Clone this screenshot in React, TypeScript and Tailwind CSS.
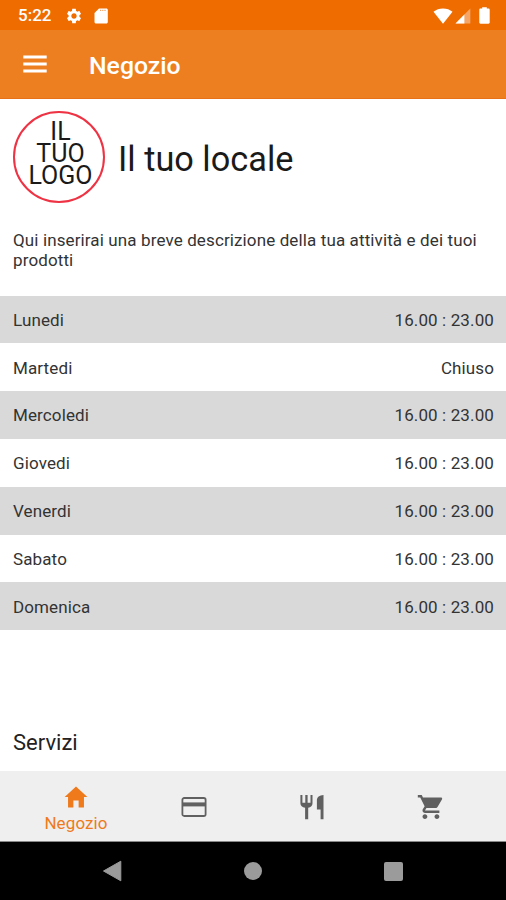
import React from 'react';
import { IoMdCart, IoMdHome } from 'react-icons/io';

interface DayHours {
  day: string;
  hours: string;
}

const openingHours: DayHours[] = [
  { day: 'Lunedi', hours: '16.00 : 23.00' },
  { day: 'Martedi', hours: 'Chiuso' },
  { day: 'Mercoledi', hours: '16.00 : 23.00' },
  { day: 'Giovedi', hours: '16.00 : 23.00' },
  { day: 'Venerdi', hours: '16.00 : 23.00' },
  { day: 'Sabato', hours: '16.00 : 23.00' },
  { day: 'Domenica', hours: '16.00 : 23.00' },
];

const StatusBar = () => (
  <div className="flex h-[30px] shrink-0 items-center bg-[#ef6c00] pl-[18px] pr-[16px] pt-[1px] text-white">
    <span className="w-[47px] pt-[1px] text-[17px] font-medium">5:22</span>
    <svg viewBox="0 0 24 24" fill="currentColor" className="h-[18px] w-[18px]">
      <path d="M19.14 12.94c.04-.3.06-.61.06-.94 0-.32-.02-.64-.07-.94l2.03-1.58c.18-.14.23-.41.12-.61l-1.92-3.32c-.12-.22-.37-.29-.59-.22l-2.39.96c-.5-.38-1.03-.7-1.62-.94l-.36-2.54c-.04-.24-.24-.41-.48-.41h-3.84c-.24 0-.43.17-.47.41l-.36 2.54c-.59.24-1.13.57-1.62.94l-2.39-.96c-.22-.08-.47 0-.59.22L2.74 8.87c-.12.21-.08.47.12.61l2.03 1.58c-.05.3-.09.63-.09.94s.02.64.07.94l-2.03 1.58c-.18.14-.23.41-.12.61l1.92 3.32c.12.22.37.29.59.22l2.39-.96c.5.38 1.03.7 1.62.94l.36 2.54c.05.24.24.41.48.41h3.84c.24 0 .44-.17.47-.41l.36-2.54c.59-.24 1.13-.56 1.62-.94l2.39.96c.22.08.47 0 .59-.22l1.92-3.32c.12-.22.07-.47-.12-.61l-2.01-1.58zM12 15.6c-1.98 0-3.6-1.62-3.6-3.6s1.62-3.6 3.6-3.6 3.6 1.62 3.6 3.6-1.62 3.6-3.6 3.6z" />
    </svg>
    <svg viewBox="0 0 14 16" className="ml-[11px] h-4 w-3.5">
      <path d="M5 .5h7.3c.9 0 1.5.6 1.5 1.5v12c0 .9-.6 1.5-1.5 1.5H2c-.9 0-1.5-.6-1.5-1.5V5z" fill="currentColor" />
      <path d="M6 2.3h6" stroke="#ef6c00" strokeWidth=".8" strokeDasharray="1.2 1" />
    </svg>
    <div className="ml-auto flex items-center">
      <svg viewBox="0 0 20 16" className="h-4 w-5">
        <path d="M10 15.7L.5 3.8C3 1.6 6.3.4 10 .4s7 1.2 9.5 3.4z" fill="currentColor" />
      </svg>
      <svg viewBox="0 0 16 16" className="ml-[2px] h-4 w-4">
        <path d="M15.3.6v14.9H.5z" fill="currentColor" fillOpacity=".4" />
        <path d="M9.4 6.6v8.9H.5z" fill="currentColor" />
      </svg>
      <svg viewBox="0 0 11 17" className="ml-[8px] h-[17px] w-[11px]">
        <path d="M3.2.3h4.6v1.3h1.7c.7 0 1.2.5 1.2 1.2v12.7c0 .7-.5 1.2-1.2 1.2h-8c-.7 0-1.2-.5-1.2-1.2V2.8c0-.7.5-1.2 1.2-1.2h1.7z" fill="currentColor" />
      </svg>
    </div>
  </div>
);

const AppBar = () => (
  <header className="flex h-[69px] shrink-0 items-center border-b border-[#e87016] bg-[#ee7f20] pl-[23px] text-white">
    <svg viewBox="0 0 24 18" className="h-[18px] w-6">
      <path d="M.3 2h23.4M.3 9h23.4M.3 16h23.4" stroke="currentColor" strokeWidth="2.8" />
    </svg>
    <h1 className="ml-[42px] pt-[3px] text-[24.8px] font-medium">Negozio</h1>
  </header>
);

const CardIcon = () => (
  <svg viewBox="0 0 26 22" className="h-[22px] w-[26px]">
    <rect x="1.4" y="2" width="23.2" height="18" rx="1.8" fill="none" stroke="currentColor" strokeWidth="1.8" />
    <path d="M1.4 8.4h23.2" stroke="currentColor" strokeWidth="4" />
  </svg>
);

const CutleryIcon = () => (
  <svg viewBox="0 0 24 26" fill="currentColor" className="h-[26px] w-6">
    <path d="M.4 1h2v7.8h2.9V1h2.3v7.8h2.9V1h2v8.2c0 2.400-1.700 4.200-4.300 4.500v11.500H5.100V13.700C2.300 13.400.4 11.600.4 9.200z" />
    <path d="M23.500 1v24.200h-2.900V15.400h-3.700V6.300c0-3 2.600-5.100 6.600-5.300z" />
  </svg>
);

const TabBar = () => (
  <nav className="flex h-[71px] shrink-0 border-b border-[#888888] bg-[#efefef] pl-[17px] pr-[17px] text-[#606060]">
    <button className="flex flex-1 flex-col items-center pt-[12px] text-[#ee7a1c]">
      <IoMdHome size={28} />
      <span className="text-[17px] leading-[25px] tracking-[0.1px]">Negozio</span>
    </button>
    <button className="flex flex-1 items-center justify-center pt-[1px]">
      <CardIcon />
    </button>
    <button className="flex flex-1 items-center justify-center pt-[1px]">
      <CutleryIcon />
    </button>
    <button className="flex flex-1 items-center justify-center pt-[2px]">
      <IoMdCart size={30} />
    </button>
  </nav>
);

const SystemNav = () => (
  <div className="flex h-[58px] shrink-0 items-center justify-between bg-black pl-[102px] pr-[103px] text-[#9b9b9b]">
    <svg viewBox="0 0 20 22" className="h-[22px] w-5">
      <path d="M1.5 11L18.8 1.2v19.6z" fill="currentColor" stroke="currentColor" strokeLinejoin="round" />
    </svg>
    <span className="h-[18px] w-[18px] rounded-full bg-[#9b9b9b]" />
    <span className="h-[19px] w-[19px] rounded-[2px] bg-[#9b9b9b]" />
  </div>
);

export default function App() {
  return (
    <div className="flex h-[900px] w-[506px] flex-col overflow-hidden bg-white font-['Roboto',sans-serif] text-[#333333]">
      <StatusBar />
      <AppBar />
      <main className="flex-1 overflow-hidden">
        <div className="flex items-center pl-[13px] pt-[12px] text-[#1a1a1a]">
          <div className="h-[92px] w-[92px] rounded-full border-2 border-[#ee3344] pl-[3px] pt-[8px] text-center text-[25px] leading-[22px]">
            IL
            <br />
            TUO
            <br />
            LOGO
          </div>
          <h2 className="ml-[13px] pt-[5px] text-[34.3px]">Il tuo locale</h2>
        </div>
        <p className="mt-[27.4px] px-[13px] text-[17px] leading-5 tracking-[0.12px]">
          Qui inserirai una breve descrizione della tua attività e dei tuoi prodotti
        </p>
        <ul className="mt-[25.2px]">
          {openingHours.map(({ day, hours }) => (
            <li key={day} className="flex h-[47.8px] items-center justify-between pl-[13px] pr-3 pt-[2px] text-[17px] tracking-[0.12px] odd:bg-[#d9d9d9]">
              <span>{day}</span>
              <span>{hours}</span>
            </li>
          ))}
        </ul>
        <h3 className="mt-[95.6px] pl-[13px] text-[22px] text-[#222222]">Servizi</h3>
      </main>
      <TabBar />
      <SystemNav />
    </div>
  );
}
